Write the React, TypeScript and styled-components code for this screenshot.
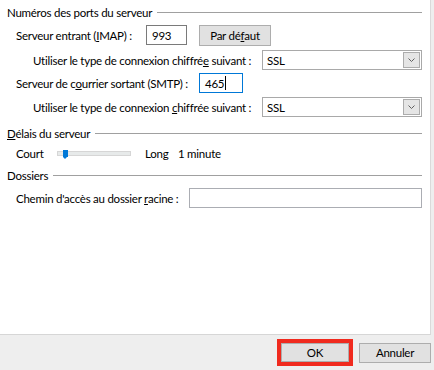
import React from 'react'
import styled, { createGlobalStyle } from 'styled-components'

const GlobalStyle = createGlobalStyle`
  html, body {
    margin: 0;
    padding: 0;
    background: #eeeeee;
  }
  body {
    font-family: Lato, "Liberation Sans", sans-serif;
    font-size: 11.5px;
    letter-spacing: -0.25px;
    color: #000;
  }
`

const Page = styled.div`
  display: flex;
  flex-direction: column;
  width: 434px;
  height: 370px;
`

const Panel = styled.div`
  box-sizing: border-box;
  width: 431px;
  height: 335px;
  background: #fff;
  border-right: 1px solid #dadada;
  border-bottom: 1px solid #d6d6d6;
  padding: 4px 8px 0 7px;
  display: flex;
  flex-direction: column;
`

const Header = styled.div<{ $top?: number }>`
  display: flex;
  align-items: center;
  height: 16px;
  margin-top: ${({ $top }) => $top || 0}px;
  gap: 5px;
  white-space: nowrap;
  &::after {
    content: '';
    flex: 1;
    height: 1px;
    background: #a0a0a0;
  }
`

const Row = styled.div<{ $top: number; $indent?: number; $h?: number }>`
  display: flex;
  align-items: center;
  height: ${({ $h }) => $h || 20}px;
  margin-top: ${({ $top }) => $top}px;
  padding-left: ${({ $indent }) => $indent || 9}px;
  white-space: nowrap;
`

const Label = styled.span<{ $w?: number; $pad?: number }>`
  display: inline-block;
  box-sizing: border-box;
  width: ${({ $w }) => ($w ? `${$w}px` : 'auto')};
  padding-left: ${({ $pad }) => $pad || 0}px;
  flex-shrink: 0;
`

const TextBox = styled.div<{ $w?: number; $focus?: boolean; $light?: boolean }>`
  box-sizing: border-box;
  width: ${({ $w }) => ($w ? `${$w}px` : 'auto')};
  flex: ${({ $w }) => ($w ? '0 0 auto' : '1')};
  height: 20px;
  border: 1px solid ${({ $focus, $light }) => ($focus ? '#0078d7' : $light ? '#abadb3' : '#7a7a7a')};
  padding: 0 0 0 5px;
  display: flex;
  align-items: center;
  background: #fff;
`

const Caret = styled.span`
  display: inline-block;
  width: 1px;
  height: 14px;
  background: #000;
  margin-left: 1px;
`

const Select = styled.div`
  box-sizing: border-box;
  width: 160px;
  height: 20px;
  border: 1px solid #a9a9a9;
  display: flex;
  align-items: center;
  justify-content: space-between;
  padding: 0 1px 0 4px;
  background: #fff;
`

const ArrowBox = styled.div`
  box-sizing: border-box;
  width: 17px;
  height: 16px;
  background: #e5e5e5;
  border: 1px solid #acacac;
  display: flex;
  align-items: center;
  justify-content: center;
`

const Button = styled.div<{ $w: number; $h?: number }>`
  box-sizing: border-box;
  width: ${({ $w }) => $w}px;
  height: ${({ $h }) => $h || 20}px;
  background: #e1e1e1;
  border: 1px solid #adadad;
  display: flex;
  align-items: center;
  justify-content: center;
`

const Track = styled.div`
  position: relative;
  box-sizing: border-box;
  width: 74px;
  height: 5px;
  background: #e7eaea;
  border: 1px solid #d6d6d6;
`

const Thumb = styled.div`
  position: absolute;
  left: 5px;
  top: -2px;
  width: 5px;
  height: 7px;
  background: #0078d7;
  &::after {
    content: '';
    position: absolute;
    left: 0;
    top: 7px;
    border-left: 2.5px solid transparent;
    border-right: 2.5px solid transparent;
    border-top: 2px solid #0078d7;
  }
`

const Footer = styled.div`
  flex: 1;
  display: flex;
  align-items: center;
  justify-content: flex-end;
  gap: 6px;
  padding-right: 3px;
`

const Highlight = styled.div`
  border: 4px solid #f02a1e;
  display: flex;
`

const Chevron = () => (
  <svg width="7" height="4" viewBox="0 0 7 4">
    <path d="M0.5 0.5 L3.5 3.5 L6.5 0.5" fill="none" stroke="#606060" strokeWidth="1" />
  </svg>
)

export default function App() {
  return (
    <Page>
      <GlobalStyle />
      <Panel>
        <Header>Numéros des ports du serveur</Header>
        <Row $top={5}>
          <Label $w={130}>Serveur entrant (<u>I</u>MAP) :</Label>
          <TextBox $w={41}>993</TextBox>
          <Button $w={72} $h={21} style={{ marginLeft: 12 }}>
            Par dé<u>f</u>aut
          </Button>
        </Row>
        <Row $top={5} $indent={26}>
          <Label $w={229}>Utiliser le type de connexion chiffré<u>e</u> suivant :</Label>
          <Select>
            SSL
            <ArrowBox><Chevron /></ArrowBox>
          </Select>
        </Row>
        <Row $top={3}>
          <Label $w={183}>Serveur de c<u>o</u>urrier sortant (SMTP) :</Label>
          <TextBox $w={44} $focus>465<Caret /></TextBox>
        </Row>
        <Row $top={4} $indent={26}>
          <Label $w={229}>Utiliser le type de connexion <u>c</u>hiffrée suivant :</Label>
          <Select>
            SSL
            <ArrowBox><Chevron /></ArrowBox>
          </Select>
        </Row>
        <Header $top={8}><span><u>D</u>élais du serveur</span></Header>
        <Row $top={5} $h={14}>
          <Label $w={41}>Court</Label>
          <Track><Thumb /></Track>
          <Label $w={47} $pad={14}>Long</Label>
          <Label>1 minute</Label>
        </Row>
        <Header $top={7}>Dossiers</Header>
        <Row $top={5}>
          <Label $w={173}>Chemin d'accès au dossier <u>r</u>acine :</Label>
          <TextBox $light />
        </Row>
      </Panel>
      <Footer>
        <Highlight>
          <Button $w={68} $h={19}>OK</Button>
        </Highlight>
        <Button $w={72}>Annuler</Button>
      </Footer>
    </Page>
  )
}
